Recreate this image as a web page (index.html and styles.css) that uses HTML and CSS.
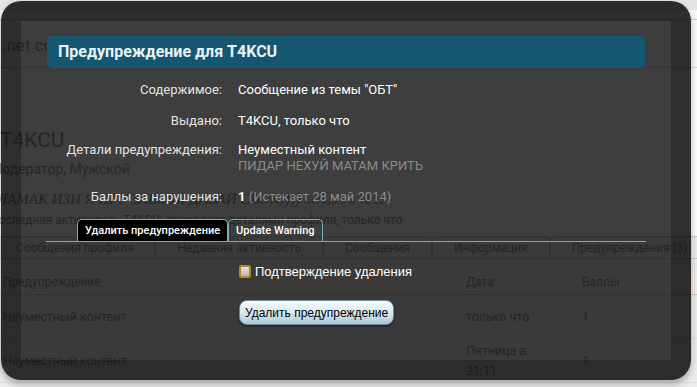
FILE: index.html
```html
<!DOCTYPE html>
<html lang="ru">
<head>
<meta charset="utf-8">
<title>Предупреждение для T4KCU</title>
<link rel="stylesheet" href="styles.css">
</head>
<body>
<div class="page">
  <div class="hdr-top"></div>
  <div class="hdr-nav"></div>
  <div class="site"><span class="site-name">.net community</span></div>
  <div class="profile">
    <h1 class="uname">T4KCU</h1>
    <div class="utitle">Модератор, <em>Мужской</em></div>
    <div class="status"><i>ЛАМАК ИЗИ Я ИГУ ЗАВОЗИ ДАВАЙ СВОЮ)))</i> <span class="stime">Сегодня в 18:22</span></div>
    <div class="lastact">Последняя активность T4KCU: Управляет деталями профиля, только что</div>
  </div>
  <ul class="ptabs">
    <li class="ptab">Сообщения профиля</li>
    <li class="ptab">Недавняя активность</li>
    <li class="ptab">Сообщения</li>
    <li class="ptab">Информация</li>
    <li class="ptab">Предупреждения (3)</li>
  </ul>
  <div class="wtable">
    <div class="wrow whead"><span>Предупреждение</span><span>Дата</span><span>Баллы</span></div>
    <div class="wrow"><span class="big">Неуместный контент</span><span class="big">только что</span><span class="big">1</span></div>
    <div class="wrow"><span class="big">Неуместный контент</span><span class="big">Пятница в 21:11</span><span class="big">1</span></div>
  </div>
</div>

<div class="overlay">
  <h2 class="ov-title">Предупреждение для T4KCU</h2>
  <div class="form">
    <div class="row"><div class="lbl">Содержимое:</div><div class="val">Сообщение из темы "ОБТ"</div></div>
    <div class="row"><div class="lbl">Выдано:</div><div class="val">T4KCU, только что</div></div>
    <div class="row details"><div class="lbl">Детали предупреждения:</div><div class="val">Неуместный контент<br><span class="muted">ПИДАР НЕХУЙ МАТАМ КРИТЬ</span></div></div>
    <div class="row"><div class="lbl">Баллы за нарушения:</div><div class="val"><b>1</b> <span class="muted">(Истекает 28 май 2014)</span></div></div>
  </div>
  <ul class="tabs">
    <li class="tab active">Удалить предупреждение</li>
    <li class="tab">Update Warning</li>
  </ul>
  <div class="pane">
    <label class="confirm"><input type="checkbox" class="cbox"><span>Подтверждение удаления</span></label>
    <button class="btn" type="button">Удалить предупреждение</button>
  </div>
</div>
</body>
</html>
```

FILE: styles.css
```css
* { box-sizing: border-box; }
html, body { margin: 0; padding: 0; }
body {
  width: 697px;
  height: 387px;
  overflow: hidden;
  position: relative;
  background: #ececec;
  font-family: "Roboto", "Liberation Sans", sans-serif;
}

/* ---------- underlying page ---------- */
.page { color: #9a9a9a; width: 720px; }
.hdr-top { height: 10px; background: #e3e3e3; }
.hdr-nav { height: 10px; background: #f8f8f8; border-bottom: 1px solid #c5d0d8; }
.site {
  height: 48px;
  padding: 13px 0 0 2px;
  font-size: 17px;
  line-height: 24px;
  white-space: nowrap;
  background: #fafafa;
  border-bottom: 1px solid #d4d4d4;
}
.profile { margin-left: -10px; background: #fdfdfd; height: 168px; }
.uname { margin: 0; padding: 59px 0 0 10px; font-size: 21px; line-height: 26px; font-weight: normal; }
.utitle { margin-top: 7px; font-size: 14px; line-height: 18px; }
.utitle em { font-style: normal; color: #a8a8a8; }
.status { margin-top: 11px; padding-left: 7px; font-family: "Liberation Serif", serif; font-size: 15px; line-height: 20px; white-space: nowrap; }
.stime { font-family: "Roboto", sans-serif; font-size: 11px; color: #b0b0b0; }
.lastact { margin-top: 1px; font-size: 12px; line-height: 16px; white-space: nowrap; }
.ptabs {
  display: flex;
  list-style: none;
  margin: 0 0 0 -6px;
  padding: 0;
  height: 23px;
  border-bottom: 1px solid #c9c9c9;
}
.ptab {
  padding: 0 21px;
  height: 22px;
  line-height: 22px;
  font-size: 12px;
  border: 1px solid #c9c9c9;
  border-bottom: none;
  border-radius: 5px 5px 0 0;
  white-space: nowrap;
}
.wtable { margin-top: 10px; margin-left: -1px; }
.wrow {
  display: grid;
  grid-template-columns: 467px 116px 1fr;
  align-items: center;
  border-bottom: 1px solid #dedede;
  min-height: 44px;
}
.wrow span { padding-left: 4px; }
.wrow span:nth-child(2) { padding-right: 30px; padding-left: 0; }
.wrow span:nth-child(3) { padding-left: 0; }
.whead { min-height: 26px; font-size: 12px; background: #f3eeea; border-bottom-color: #d9c6b8; }
.big { font-size: 12.5px; line-height: 20px; }

/* ---------- overlay ---------- */
.overlay {
  position: absolute;
  left: 1px;
  top: 1px;
  width: 690px;
  height: 379px;
  border: 20px solid rgba(0, 0, 0, 0.815);
  border-radius: 20px;
  background: rgba(0, 0, 0, 0.755);
  background-clip: padding-box;
  box-shadow: 0 4px 7px rgba(0, 0, 0, 0.3);
  padding: 15px 26px 0;
  color: #fff;
}
.ov-title {
  margin: 0;
  height: 32px;
  line-height: 32px;
  padding-left: 11px;
  background: #155670;
  border-radius: 5px;
  font-size: 16px;
  font-weight: bold;
  color: #e9f2f6;
}
.row { display: flex; gap: 16px; margin-top: 15px; font-size: 13px; line-height: 16px; }
.row:first-child { margin-top: 14px; }
.row.details { margin-top: 13px; }
.lbl { flex: none; width: 175px; text-align: right; color: #e4e4e4; }
.val { color: #fff; }
.muted { color: #8b8b8b; }

.tabs {
  display: flex;
  list-style: none;
  margin: 14px -1px 0;
  padding: 0 0 0 31px;
  height: 23px;
  border-bottom: 1px solid #74aec2;
}
.tab {
  height: 22px;
  line-height: 21px;
  padding: 0 7px;
  border: 1px solid #74aec2;
  border-bottom: none;
  border-radius: 5px 5px 0 0;
  font-size: 11px;
  font-weight: 500;
  color: #fff;
  white-space: nowrap;
}
.tab.active { background: #000; }

.pane { padding-left: 192px; }
.confirm {
  display: flex;
  align-items: center;
  gap: 4px;
  margin-top: 21px;
  height: 16px;
  font-family: "Liberation Sans", sans-serif;
  font-size: 13px;
  color: #fff;
}
.cbox {
  appearance: none;
  -webkit-appearance: none;
  margin: 0;
  width: 12px;
  height: 13px;
  border: 2px solid #b3852f;
  border-radius: 2px;
  background: linear-gradient(#e6e6e6, #b4b4b4);
}
.btn {
  display: block;
  margin-top: 21px;
  height: 25px;
  padding: 0 5px;
  border: 1px solid #6f8d9b;
  border-radius: 8px;
  background: linear-gradient(#f6fafc, #dce9ef 50%, #a9c7d5);
  box-shadow: 0 1px 2px rgba(0, 0, 0, 0.6), inset 0 1px 0 #ffffff;
  font-family: "Liberation Sans", sans-serif;
  font-size: 12px;
  color: #000;
}
```
